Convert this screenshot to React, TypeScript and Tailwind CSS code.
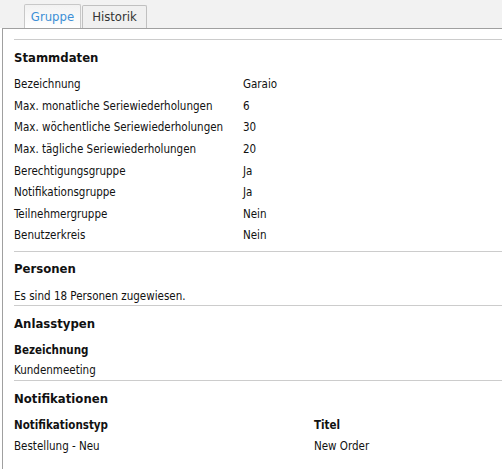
import React from "react";

const font = { fontFamily: '"DejaVu Sans Condensed", "DejaVu Sans", sans-serif' };

function Row({ label, value }: { label: string; value: string }) {
  return (
    <div className="flex h-[21.6px] pt-[4px] items-center">
      <div className="w-[229px] shrink-0">{label}</div>
      <div>{value}</div>
    </div>
  );
}

export default function App() {
  const rows: [string, string][] = [
    ["Bezeichnung", "Garaio"],
    ["Max. monatliche Seriewiederholungen", "6"],
    ["Max. wöchentliche Seriewiederholungen", "30"],
    ["Max. tägliche Seriewiederholungen", "20"],
    ["Berechtigungsgruppe", "Ja"],
    ["Notifikationsgruppe", "Ja"],
    ["Teilnehmergruppe", "Nein"],
    ["Benutzerkreis", "Nein"],
  ];
  return (
    <div className="w-[502px] h-[469px] bg-white text-[11.5px] text-[#111] overflow-hidden" style={font}>
      <div className="bg-[#f2f2f2] h-[28px] flex items-end pl-[24px]">
        <div className="h-[24px] w-[57px] flex items-center justify-center bg-gradient-to-b from-[#f2f2f2] to-white border border-b-0 border-[#c8c8c8] text-[#3d8fd6] text-[13px] rounded-t-[2px]">
          Gruppe
        </div>
        <div className="h-[23px] w-[65px] ml-[1px] flex items-center justify-center bg-[#f0f0f0] border border-b-0 border-[#c0c0c0] text-[#333] text-[13px] rounded-t-[2px]">
          Historik
        </div>
      </div>
      <div className="ml-[2px] border-l border-t border-[#a0a0a0] h-[441px] pl-[11px] pt-[10px]">
        <div className="border-t border-[#cccccc]" />
        <div className="font-bold text-[13px] h-[32px] pt-[4px] flex items-center">Stammdaten</div>
        <div>
          {rows.map(([l, v]) => (
            <Row key={l} label={l} value={v} />
          ))}
        </div>
        <div className="border-t border-[#cccccc] mt-[6px]" />
        <div className="font-bold text-[13px] h-[32px] pt-[2px] flex items-center">Personen</div>
        <div className="h-[21px] pt-[4px] flex items-center">Es sind 18 Personen zugewiesen.</div>
        <div className="border-t border-[#cccccc]" />
        <div className="font-bold text-[13px] h-[34px] pt-[2px] flex items-center">Anlasstypen</div>
        <div className="font-bold h-[19px] pt-[2px] flex items-center">Bezeichnung</div>
        <div className="h-[21px] pt-[2px] flex items-center">Kundenmeeting</div>
        <div className="border-t border-[#cccccc]" />
        <div className="font-bold text-[13px] h-[33px] pt-[2px] flex items-center">Notifikationen</div>
        <div className="flex font-bold h-[20px] pt-[4px] items-center">
          <div className="w-[300px]">Notifikationstyp</div>
          <div>Titel</div>
        </div>
        <div className="flex h-[20px] pt-[6px] items-center">
          <div className="w-[300px]">Bestellung - Neu</div>
          <div>New Order</div>
        </div>
      </div>
    </div>
  );
}
